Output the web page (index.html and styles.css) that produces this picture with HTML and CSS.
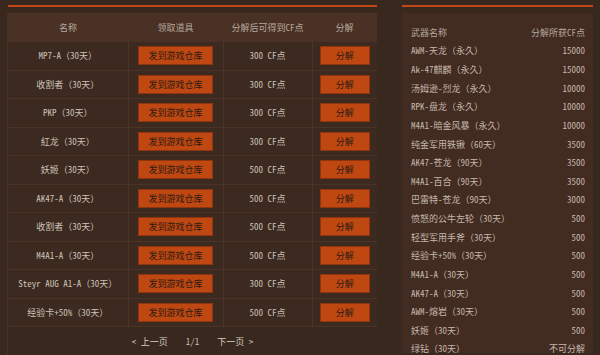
FILE: index.html
```html
<!DOCTYPE html>
<html>
<head>
<meta charset="utf-8">
<link rel="stylesheet" href="styles.css">
</head>
<body>
<div class="page">
  <section class="left">
    <div class="topline"></div>
    <table class="tbl">
      <thead>
        <tr><th class="c1">名称</th><th class="c2">领取道具</th><th class="c3">分解后可得到CF点</th><th class="c4">分解</th></tr>
      </thead>
      <tbody>
        <tr><td>MP7-A（30天）</td><td><span class="btn wide">发到游戏仓库</span></td><td>300 CF点</td><td><span class="btn">分解</span></td></tr>
        <tr><td>收割者（30天）</td><td><span class="btn wide">发到游戏仓库</span></td><td>300 CF点</td><td><span class="btn">分解</span></td></tr>
        <tr><td>PKP（30天）</td><td><span class="btn wide">发到游戏仓库</span></td><td>300 CF点</td><td><span class="btn">分解</span></td></tr>
        <tr><td>紅龙（30天）</td><td><span class="btn wide">发到游戏仓库</span></td><td>300 CF点</td><td><span class="btn">分解</span></td></tr>
        <tr><td>妖姬（30天）</td><td><span class="btn wide">发到游戏仓库</span></td><td>500 CF点</td><td><span class="btn">分解</span></td></tr>
        <tr><td>AK47-A（30天）</td><td><span class="btn wide">发到游戏仓库</span></td><td>500 CF点</td><td><span class="btn">分解</span></td></tr>
        <tr><td>收割者（30天）</td><td><span class="btn wide">发到游戏仓库</span></td><td>500 CF点</td><td><span class="btn">分解</span></td></tr>
        <tr><td>M4A1-A（30天）</td><td><span class="btn wide">发到游戏仓库</span></td><td>500 CF点</td><td><span class="btn">分解</span></td></tr>
        <tr><td>Steyr AUG A1-A（30天）</td><td><span class="btn wide">发到游戏仓库</span></td><td>300 CF点</td><td><span class="btn">分解</span></td></tr>
        <tr><td>经验卡+50%（30天）</td><td><span class="btn wide">发到游戏仓库</span></td><td>500 CF点</td><td><span class="btn">分解</span></td></tr>
      </tbody>
    </table>
    <div class="pager">
      <span class="pl">&lt; 上一页</span>
      <span class="pn">1/1</span>
      <span class="pl">下一页 &gt;</span>
    </div>
  </section>
  <section class="right">
    <div class="topline"></div>
    <div class="box">
      <div class="row head"><span>武器名称</span><span>分解所获CF点</span></div>
      <div class="row"><span>AWM-天龙（永久）</span><span>15000</span></div>
      <div class="row"><span>Ak-47麒麟（永久）</span><span>15000</span></div>
      <div class="row"><span>汤姆逊-烈龙（永久）</span><span>10000</span></div>
      <div class="row"><span>RPK-盘龙（永久）</span><span>10000</span></div>
      <div class="row"><span>M4A1-暗金风暴（永久）</span><span>10000</span></div>
      <div class="row"><span>纯金军用铁锹（60天）</span><span>3500</span></div>
      <div class="row"><span>AK47-苍龙（90天）</span><span>3500</span></div>
      <div class="row"><span>M4A1-百合（90天）</span><span>3500</span></div>
      <div class="row"><span>巴雷特-苍龙（90天）</span><span>3000</span></div>
      <div class="row"><span>愤怒的公牛左轮（30天）</span><span>500</span></div>
      <div class="row"><span>轻型军用手斧（30天）</span><span>500</span></div>
      <div class="row"><span>经验卡+50%（30天）</span><span>500</span></div>
      <div class="row"><span>M4A1-A（30天）</span><span>500</span></div>
      <div class="row"><span>AK47-A（30天）</span><span>500</span></div>
      <div class="row"><span>AWM-熔岩（30天）</span><span>500</span></div>
      <div class="row"><span>妖姬（30天）</span><span>500</span></div>
      <div class="row"><span>绿钻（30天）</span><span>不可分解</span></div>
    </div>
  </section>
</div>
</body>
</html>
```

FILE: styles.css
```css
html, body {
  margin: 0;
  padding: 0;
}
body {
  width: 600px;
  height: 355px;
  overflow: hidden;
  background: #39281e;
  font-family: "Noto Sans Mono CJK SC", "Noto Sans CJK SC", monospace;
  font-size: 9px;
  color: #cbc2b9;
}
.page {
  display: flex;
  gap: 25px;
  padding: 5px 0 0 7px;
}
.topline {
  height: 2px;
  background: #c2461a;
}
.left {
  width: 370px;
}
.left .topline {
  margin-left: 1px;
}
.tbl {
  margin-top: 6px;
  width: 370px;
  border-collapse: collapse;
  table-layout: fixed;
  border-left: 1px solid #443126;
}
.tbl th {
  height: 29px;
  padding: 0;
  background: #4a3125;
  color: #b5a99e;
  font-weight: normal;
}
.c1 { width: 120px; }
.c2 { width: 95px; }
.c3 { width: 89px; }
.c4 { width: 65px; }
.tbl td {
  height: 27.5px;
  padding: 0;
  text-align: center;
  background: #3c291f;
  border-bottom: 1px solid #4a3428;
  border-right: 1px solid #4a3428;
}
.tbl td:last-child {
  border-right: none;
}
.btn {
  display: inline-block;
  width: 48px;
  height: 17px;
  line-height: 17px;
  background: #bf4711;
  border: 1px solid #8e3510;
  color: #2b1b12;
  vertical-align: middle;
}
.btn.wide {
  width: 73px;
}
.pager {
  display: flex;
  justify-content: center;
  align-items: center;
  gap: 18px;
  height: 28px;
  border-left: 1px solid #443126;
  color: #d6cec6;
  font-size: 9px;
}
.pager .pn {
  color: #c4bab0;
}
.right {
  width: 191px;
}
.right .box {
  margin-top: 6px;
  height: 340px;
  background: #422b20;
  padding: 10px 8px 0 9px;
  box-sizing: border-box;
}
.row {
  display: flex;
  justify-content: space-between;
  align-items: center;
  height: 18.63px;
  color: #c4b8ad;
}
.row.head {
  color: #b5a99e;
}
```
